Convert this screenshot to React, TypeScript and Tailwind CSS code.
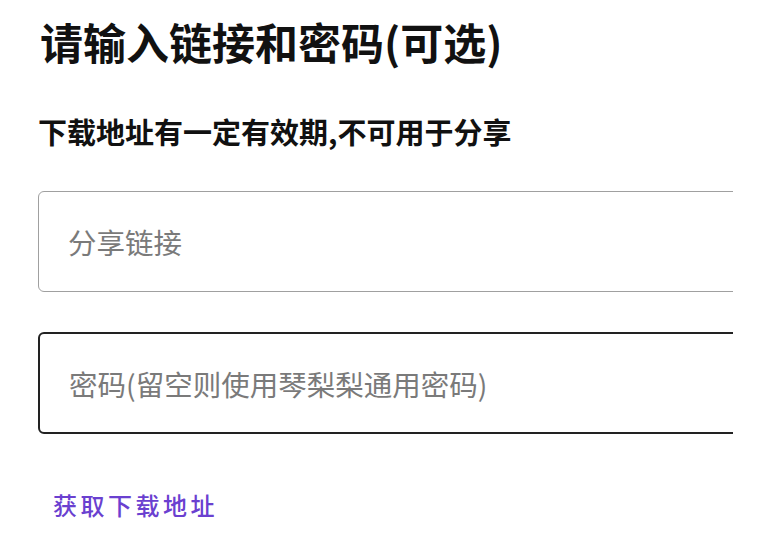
const cjk = "font-['Noto_Sans_CJK_SC','Noto_Sans',sans-serif]";

export default function App() {
  return (
    <div className={`w-[779px] h-[550px] bg-white overflow-hidden ${cjk}`}>
      <div className="w-[733px] pl-[38px] overflow-hidden">
        <h1 className="pt-[13px] pl-[2px] text-[43px] leading-[56px] font-bold text-[#111]">
          请输入链接和密码(可选)
        </h1>
        <p className="mt-[44px] text-[29px] leading-[36px] font-bold text-[#111]">
          下载地址有一定有效期,不可用于分享
        </p>

        <input
          type="text"
          placeholder="分享链接"
          className="mt-[42px] block w-[760px] h-[101px] rounded-[6px] border border-[#a0a0a0] px-[29px] text-[28.5px] text-[#222] placeholder:text-[#7a7a7a] outline-none"
        />
        <input
          type="password"
          placeholder="密码(留空则使用琴梨梨通用密码)"
          className="mt-[40px] block w-[760px] h-[102px] rounded-[6px] border-2 border-[#222] px-[29px] text-[28.5px] text-[#222] placeholder:text-[#7a7a7a] outline-none"
        />

        <button className="mt-[55px] ml-[15px] text-[24px] leading-[32px] font-medium tracking-[3.5px] text-[#6a40d0]">
          获取下载地址
        </button>
      </div>
    </div>
  );
}
